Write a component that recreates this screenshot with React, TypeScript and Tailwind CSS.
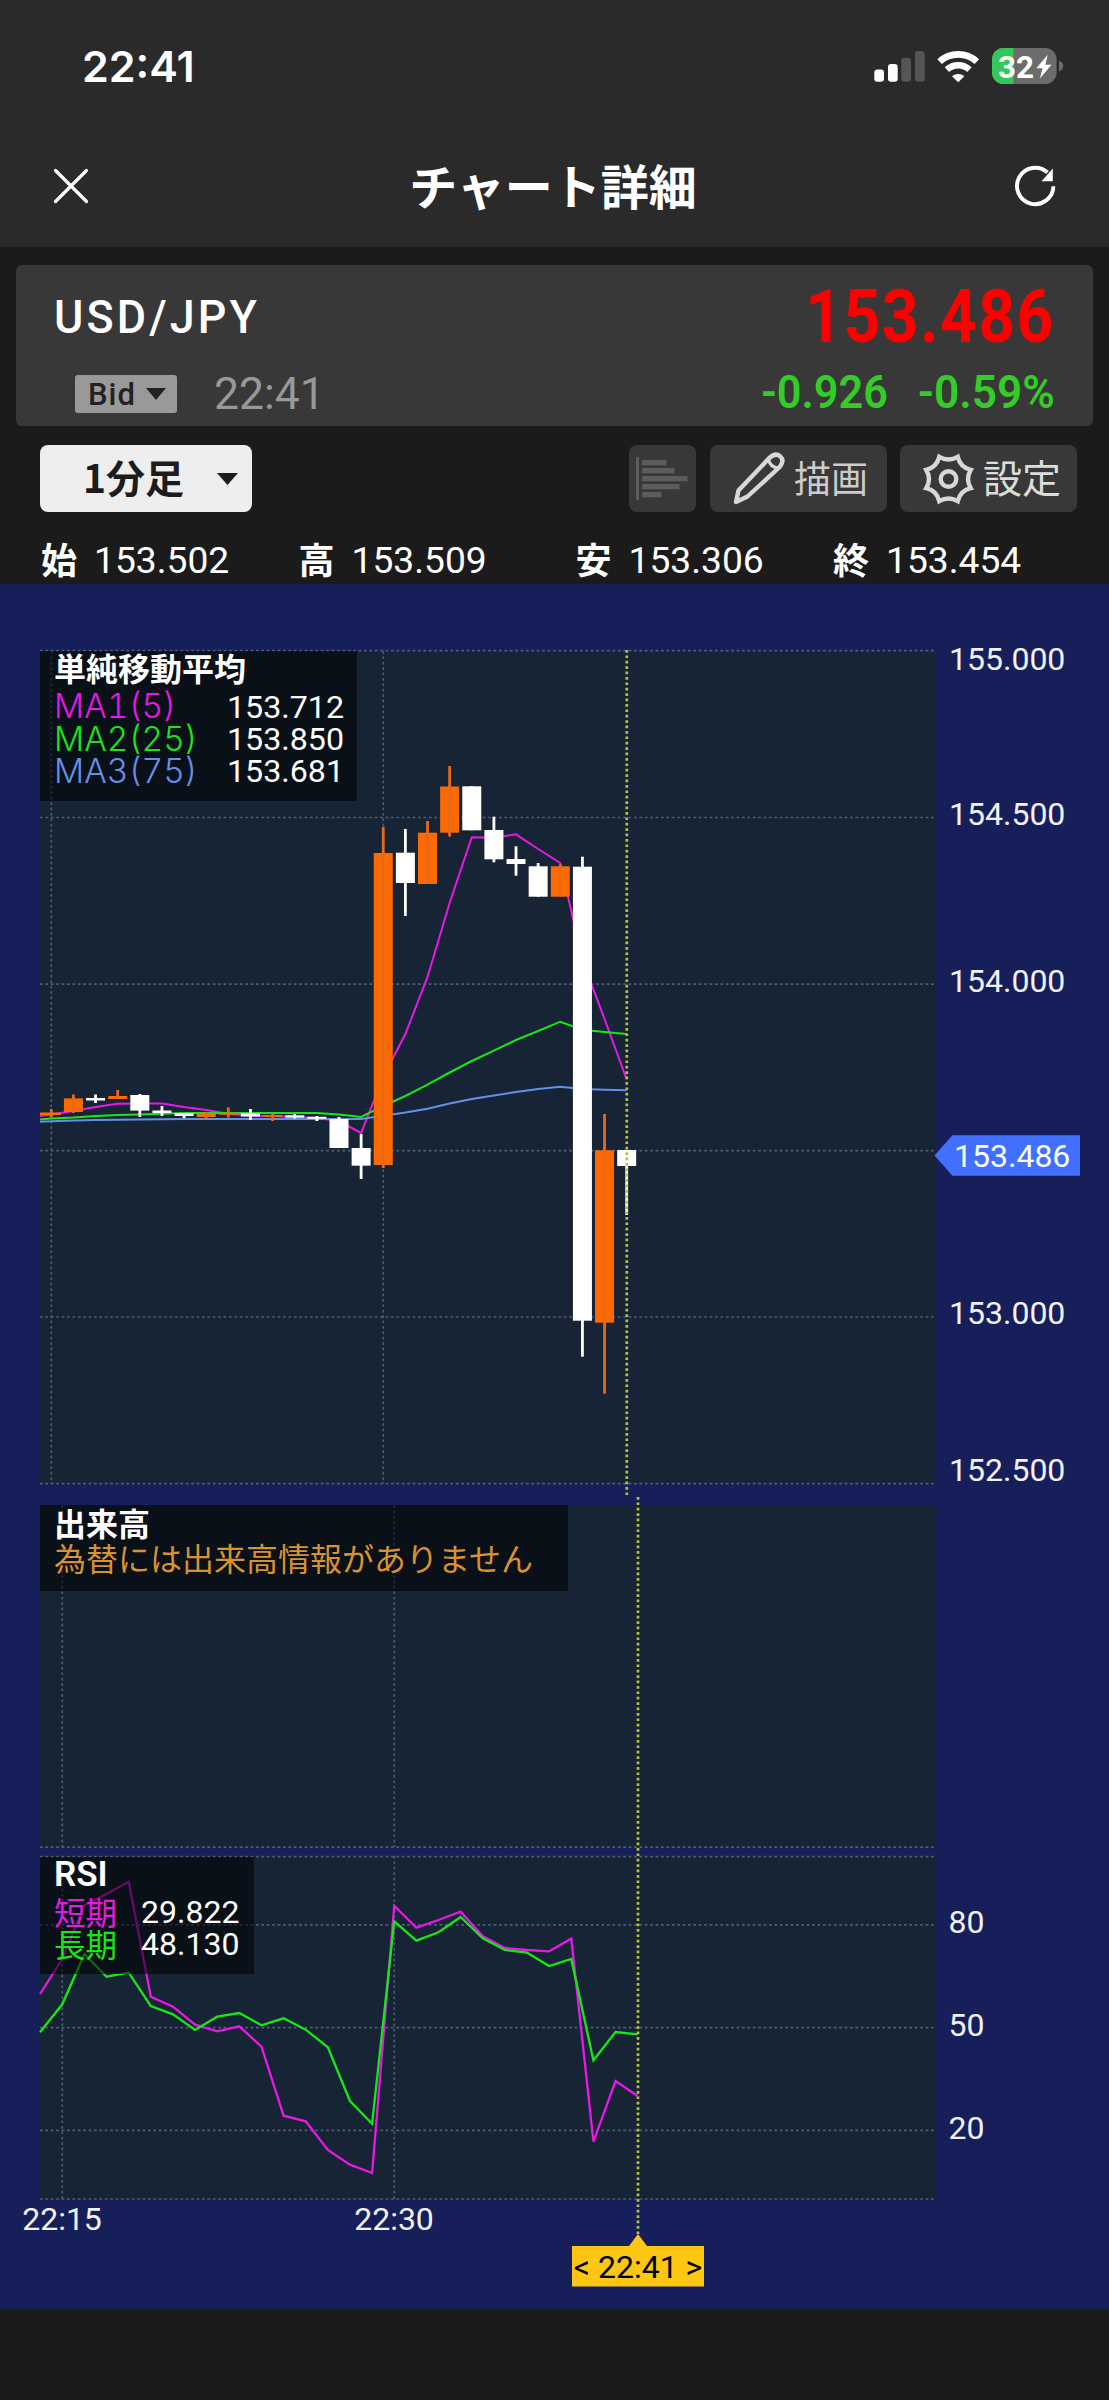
import React from 'react';

type Candle = [top: number, bottom: number, high: number, low: number, up: boolean];

// body top, body bottom, wick top, wick bottom, rising
const candles: Candle[] = [
  [1112.5, 1115, 1109, 1117.5, true],
  [1098.4, 1112, 1094.5, 1113, true],
  [1098, 1100.5, 1094.5, 1103, false],
  [1096, 1099, 1090, 1099, true],
  [1095, 1110.6, 1094, 1117, false],
  [1110.5, 1113, 1106, 1116, false],
  [1113, 1116, 1113, 1118, false],
  [1114, 1117, 1112, 1118.5, true],
  [1112.8, 1114.8, 1107.5, 1117.5, true],
  [1113.5, 1116.5, 1109, 1120, false],
  [1115, 1117, 1114, 1121, true],
  [1115.3, 1117.6, 1114, 1118.5, false],
  [1116.8, 1118.8, 1116, 1121, false],
  [1119, 1148, 1117, 1148, false],
  [1148, 1165.7, 1134, 1179, false],
  [853, 1165, 827, 1168, true],
  [852.7, 883, 829, 916, false],
  [832.7, 884, 821, 884, true],
  [786.5, 832.7, 766, 836.7, true],
  [786.3, 830.3, 786.3, 830.3, false],
  [830, 859.3, 816.7, 862.3, false],
  [859, 864, 846.3, 875.7, false],
  [866.3, 896.7, 863, 896.7, false],
  [866.3, 896.7, 864.3, 896.7, true],
  [866.7, 1320.7, 856.7, 1356.7, false],
  [1150.3, 1322.7, 1114, 1393.7, true],
  [1150, 1166, 1150, 1215, false],
];

const ma1 = [1116, 1114.5, 1111, 1107, 1103.7, 1103.4, 1103.4, 1107, 1110, 1113.7, 1116, 1116, 1117, 1118, 1121, 1133, 1077, 1034, 977, 903, 837.3, 837.7, 834.3, 849, 863, 960, 1019, 1079.5];
const ma2 = [1119.4, 1118.5, 1117.5, 1116, 1115, 1114.5, 1113.7, 1113, 1113, 1113, 1113, 1113, 1113, 1113, 1114.5, 1117, 1106, 1096, 1084.7, 1072.5, 1061, 1050.7, 1040, 1031, 1021.7, 1029.7, 1032, 1034];
const ma3 = [1121.7, 1121.3, 1120.5, 1120, 1119.8, 1119.6, 1119.3, 1119, 1119, 1119, 1119, 1119, 1119, 1119, 1119, 1119, 1115.7, 1112.5, 1108.7, 1103.5, 1099, 1095.5, 1092, 1089, 1086.7, 1089, 1089.7, 1090.3];

const rsiShort = [1994, 1959, 1905, 1894, 1881.7, 1996.7, 2006.7, 2024.7, 2031.3, 2026.3, 2046.7, 2115.7, 2121.3, 2150, 2164.7, 2173, 1905.7, 1927.7, 1920, 1911.7, 1936.3, 1948, 1950, 1951.3, 1938.7, 2141.7, 2081, 2096];
const rsiLong = [2032.3, 2004.3, 1954, 1976.7, 1972.7, 2006, 2014.3, 2030, 2016.7, 2013, 2025.3, 2018.3, 2029.7, 2047.3, 2101, 2123.7, 1921.3, 1940.7, 1932.3, 1917, 1938.3, 1950, 1952.7, 1966, 1959, 2060.3, 2032, 2034.3];

const STEP = 22.13;
const LEFT = 40;
const RIGHT = 934;
const PRICE_X = 51.3;
const RSI_X = 62.3;

// first value sits on the left edge of the plot, the rest on the minute steps
const toPoints = (values: number[], x0: number) =>
  values.map((y, i) => `${i === 0 ? LEFT : x0 + STEP * (i - 1)},${y}`).join(' ');

const HLine = ({ y }: { y: number }) => (
  <line x1={LEFT} x2={RIGHT} y1={y} y2={y} stroke="#56647c" strokeOpacity="0.9" strokeWidth="1.7" strokeDasharray="2.7 2.7" />
);

const VLine = ({ x, y1, y2 }: { x: number; y1: number; y2: number }) => (
  <line x1={x} x2={x} y1={y1} y2={y2} stroke="#56647c" strokeOpacity="0.9" strokeWidth="1.6" strokeDasharray="2.7 2.7" />
);

const Cursor = ({ x, y1, y2 }: { x: number; y1: number; y2: number }) => (
  <line x1={x} x2={x} y1={y1} y2={y2} stroke="#b4c43c" strokeWidth="2.7" strokeDasharray="2.7 2.7" />
);

const SignalIcons = () => (
  <svg width="192" height="40" viewBox="873 46 192 40">
    <rect x="874.3" y="69.5" width="9.7" height="12.3" rx="3" fill="#fff" />
    <rect x="888" y="64" width="9.7" height="17.8" rx="3" fill="#fff" />
    <rect x="901.3" y="57.8" width="9.7" height="24" rx="3" fill="#555" />
    <rect x="915" y="51" width="9.7" height="30.8" rx="3" fill="#555" />
    <g fill="none" stroke="#fff">
      <path d="M939.6 61.6a27.5 27.5 0 0 1 37.2 0" strokeWidth="6.6" />
      <path d="M946.9 69.6a16.8 16.8 0 0 1 22.6 0" strokeWidth="6.4" />
    </g>
    <path d="M952 76.3a9.4 9.4 0 0 1 12.4 0l-6.2 5.9z" fill="#fff" />
    <clipPath id="battery">
      <rect x="992" y="48" width="64.6" height="36" rx="11.5" />
    </clipPath>
    <g clipPath="url(#battery)">
      <rect x="992" y="48" width="65" height="36" fill="#6c6c6c" />
      <rect x="992" y="48" width="21.5" height="36" fill="#34c759" />
    </g>
    <path d="M1059 60.8c2.7.9 4.2 2.8 4.2 5.3s-1.5 4.5-4.2 5.4z" fill="#6c6c6c" />
    <text x="998" y="78" fill="#fff" fontFamily="Roboto" fontWeight="700" fontSize="32" textLength="36" lengthAdjust="spacingAndGlyphs">
      32
    </text>
    <path d="M1047.8 54.8 1036.3 68.2h6.3l-2.8 10.4 11.7-13.8h-6.2z" fill="#fff" />
  </svg>
);

const Header = () => (
  <header className="h-[246.5px] bg-[#2a2a2a]">
    <div className="flex h-[132px] items-center justify-between pl-[82px] pr-[44px]">
      <span className="font-['Inter'] text-[43px] font-semibold leading-none">22:41</span>
      <SignalIcons />
    </div>
    <div className="flex h-[108px] items-center justify-between pl-[52px] pr-[50px]">
      <svg width="38" height="38" viewBox="0 0 38 38">
        <path d="M3.5 3.5 34.5 34.5M34.5 3.5 3.5 34.5" stroke="#fff" strokeWidth="3.2" strokeLinecap="round" />
      </svg>
      <h1 className="-mt-[5px] pl-[3px] font-['Noto_Sans_CJK_JP',sans-serif] text-[48px] font-bold leading-none">チャート詳細</h1>
      <svg width="46" height="46" viewBox="0 0 46 46">
        <path d="M40.4 23.2A18.2 18.2 0 1 1 34.5 9.5" fill="none" stroke="#fff" strokeWidth="3.9" />
        <path d="M39.8 5.5V18.3H28.5z" fill="#fff" />
      </svg>
    </div>
  </header>
);

const Quote = () => (
  <section className="mx-4 mt-[18.5px] flex h-[161px] justify-between rounded-md bg-[#383838] px-[38px]">
    <div>
      <div className="mt-[29px] flex h-[46px] items-center">
        <span className="origin-left scale-x-[0.975] text-[46px] font-medium leading-none tracking-[3.2px]">USD/JPY</span>
      </div>
      <div className="mt-[31px] flex h-[46px] items-center pl-[21px]">
        <div className="flex h-[38px] w-[102px] items-center rounded-[3px] bg-[#999] pl-[13px] text-[#222]">
          <span className="w-[58px] text-[31px] font-medium leading-none tracking-[1px]">Bid</span>
          <svg width="20" height="12" viewBox="0 0 20 12">
            <path d="M0 0h20L10 12z" fill="#222" />
          </svg>
        </div>
        <span className="ml-[37px] text-[44.5px] leading-none text-[#999]">22:41</span>
      </div>
    </div>
    <div className="flex flex-col items-end">
      <div className="mt-[17px] flex h-[70px] items-center">
        <span className="origin-right scale-x-[0.87] text-[74px] font-bold leading-none tracking-[1.5px] text-[#ff0000]">153.486</span>
      </div>
      <div className="mt-[17px] flex h-[46px] w-[294px] items-center justify-between text-[46px] font-semibold leading-none text-[#33cc28]">
        <span className="origin-left scale-x-[0.94]">-0.926</span>
        <span className="origin-right scale-x-[0.96]">-0.59%</span>
      </div>
    </div>
  </section>
);

const Toolbar = () => (
  <div className="mt-[19px] flex h-[67px] pl-10 pr-8 font-['Noto_Sans_CJK_JP',sans-serif]">
    <button className="flex w-[212px] items-center rounded-lg bg-[#eee] pl-[43px] text-[#1c1c1c]">
      <span className="-mt-[5px] w-[134px] text-left text-[39px] font-bold leading-none">1分足</span>
      <svg width="21" height="12" viewBox="0 0 21 12">
        <path d="M0 0h21L10.5 12z" fill="#1c1c1c" />
      </svg>
    </button>
    <button className="ml-auto flex w-[67px] items-center rounded-lg bg-[#383838] pl-[7px]">
      <svg width="52" height="44" viewBox="0 0 52 44" fill="#5c5c5c">
        <path d="M0 0h3v43H0zM6 3h24.5v5.2H6zM6 11h32.5v5.2H6zM6 19h45.5v5.2H6zM6 27h37.5v5.2H6zM6 35h19.5v5.2H6z" />
      </svg>
    </button>
    <button className="ml-[14px] flex w-[177px] items-center rounded-lg bg-[#383838] pl-[23px] text-[#ccc]">
      <svg width="52" height="53" viewBox="0 0 52 53" fill="none" stroke="#d8d8d8" strokeWidth="4.4">
        <path d="M3 50 5.5 38.5 36.5 5.8Q42.5 .2 47.2 4.4T46.7 15L14.5 44.5Z" strokeLinejoin="round" />
        <path d="M35.5 6.8Q36.5 15.5 46 16" strokeWidth="3.2" />
      </svg>
      <span className="-mt-[3px] ml-[9px] text-[37px] leading-none">描画</span>
    </button>
    <button className="ml-[13px] flex w-[177px] items-center rounded-lg bg-[#383838] pl-[22px] text-[#ddd]">
      <svg width="53" height="52" viewBox="-26.5 -26 53 52" fill="none" stroke="#d8d8d8" strokeWidth="4.4">
        <path d="M-9.2-22.2Q0-16.8 9.2-22.2Q11.7-11.7 22.2-9.2Q16.8 0 22.2 9.2Q11.7 11.7 9.2 22.2Q0 16.8-9.2 22.2Q-11.7 11.7-22.2 9.2Q-16.8 0-22.2-9.2Q-11.7-11.7-9.2-22.2Z" />
        <circle r="7.8" />
      </svg>
      <span className="-mt-[5px] ml-[8px] text-[39px] leading-none">設定</span>
    </button>
  </div>
);

const ohlc = [
  { label: '始', value: '153.502', width: 'w-[257.5px]' },
  { label: '高', value: '153.509', width: 'w-[277px]' },
  { label: '安', value: '153.306', width: 'w-[257.5px]' },
  { label: '終', value: '153.454', width: 'w-[230px]' },
];

const Ohlc = () => (
  <div className="mt-[25px] flex h-[47px] items-center pl-[41px]">
    {ohlc.map((item) => (
      <div key={item.label} className={`flex items-center ${item.width}`}>
        <span className="-mt-[4px] w-[53px] font-['Noto_Sans_CJK_JP',sans-serif] text-[36px] font-bold leading-none">{item.label}</span>
        <span className="text-[37.2px] leading-none">{item.value}</span>
      </div>
    ))}
  </div>
);

const priceLabels = [
  { text: '155.000', y: 658 },
  { text: '154.500', y: 813.5 },
  { text: '154.000', y: 980.5 },
  { text: '153.000', y: 1312.5 },
  { text: '152.500', y: 1469 },
];

const movingAverages = [
  { name: 'MA1(5)', value: '153.712', color: 'text-[#e619e6]' },
  { name: 'MA2(25)', value: '153.850', color: 'text-[#19e619]' },
  { name: 'MA3(75)', value: '153.681', color: 'text-[#6490e8]' },
];

const PricePanel = () => (
  <div className="relative h-[912px]">
    <svg width="1109" height="912" viewBox="0 584 1109 912" className="block">
      <rect x={LEFT} y="651" width="895" height="833" fill="#172435" />
      {[650.7, 817.5, 984.2, 1150.6, 1317, 1483.7].map((y) => (
        <HLine key={y} y={y} />
      ))}
      <VLine x={51.3} y1={651} y2={1484} />
      <VLine x={383.3} y1={651} y2={1484} />
      <g fill="none" strokeWidth="2">
        <polyline points={toPoints(ma1, PRICE_X)} stroke="#e619e6" />
        <polyline points={toPoints(ma2, PRICE_X)} stroke="#19e619" />
        <polyline points={toPoints(ma3, PRICE_X)} stroke="#6490e8" />
      </g>
      {candles.map(([top, bottom, high, low, up], i) => {
        const x = PRICE_X + STEP * i;
        const left = i === 0 ? LEFT : x - 9.5;
        return (
          <g key={i} fill={up ? '#ff6a00' : '#fff'}>
            <rect x={left} y={top} width={x + 9.5 - left} height={bottom - top} />
            <rect x={x - 1.4} y={high} width="2.8" height={low - high} fill={up ? '#e8691a' : '#fff'} />
          </g>
        );
      })}
      <Cursor x={626.8} y1={650} y2={1495} />
      <g fill="#f2f3fa" fontFamily="Roboto" fontSize="32">
        {priceLabels.map((label) => (
          <text key={label.text} x="949" y={label.y + 11.5}>
            {label.text}
          </text>
        ))}
        <path d="M934.5 1155.500 952.500 1135.300H1080V1175.700H952.500z" fill="#4170ff" />
        <text x="954" y="1166.500" fill="#fff">153.486</text>
      </g>
    </svg>
    <div className="absolute left-10 top-[67px] h-[150px] w-[317px] bg-black/55 pl-[14px]">
      <div className="flex h-[32px] items-center font-['Noto_Sans_CJK_JP',sans-serif] text-[32px] font-bold leading-none">
        単純移動平均
      </div>
      {movingAverages.map((ma) => (
        <div key={ma.name} className="flex h-[32.2px] translate-y-[7.500px] items-center">
          <span className={`w-[173px] font-['Inter'] text-[33.500px] font-light leading-none tabular-nums ${ma.color}`}>{ma.name}</span>
          <span className="text-[32.200px] leading-none">{ma.value}</span>
        </div>
      ))}
    </div>
  </div>
);

const VolumePanel = () => (
  <div className="relative h-[352px]">
    <svg width="1109" height="352" viewBox="0 1496 1109 352" className="block">
      <rect x={LEFT} y="1505" width="895" height="342" fill="#172435" />
      <HLine y={1847.2} />
      <VLine x={62.3} y1={1505} y2={1847} />
      <VLine x={394.3} y1={1505} y2={1847} />
      <Cursor x={638} y1={1497} y2={1848} />
    </svg>
    <div className="absolute left-10 top-[9px] h-[86px] w-[528px] bg-black/55 pl-[14px] font-['Noto_Sans_CJK_JP',sans-serif] leading-none">
      <div className="flex h-[33px] items-center text-[32px] font-bold">出来高</div>
      <div className="flex h-[38px] items-center whitespace-nowrap text-[32px] text-[#d8922e]">為替には出来高情報がありません</div>
    </div>
  </div>
);

const RsiPanel = () => (
  <div className="relative h-[461px]">
    <svg width="1109" height="461" viewBox="0 1848 1109 461" className="block">
      <rect x={LEFT} y="1856" width="895" height="343" fill="#172435" />
      {[1856.7, 1924.8, 2027.6, 2130.4, 2199].map((y) => (
        <HLine key={y} y={y} />
      ))}
      <VLine x={62.3} y1={1856} y2={2199} />
      <VLine x={394.3} y1={1856} y2={2199} />
      <g fill="none" strokeWidth="2.3">
        <polyline points={toPoints(rsiShort, RSI_X)} stroke="#e619e6" />
        <polyline points={toPoints(rsiLong, RSI_X)} stroke="#19e619" />
      </g>
      <Cursor x={638} y1={1848} y2={2236} />
      <g fill="#f2f3fa" fontFamily="Roboto" fontSize="32">
        <text x="948.5" y="1932.5">80</text>
        <text x="948.5" y="2035.5">50</text>
        <text x="948.5" y="2138.5">20</text>
        <text x="62" y="2229.5" textAnchor="middle">22:15</text>
        <text x="394" y="2229.5" textAnchor="middle">22:30</text>
      </g>
      <path d="M572 2246h57l9-12 9 12h57v40.5H572z" fill="#fcc612" />
      <text x="638" y="2277.5" textAnchor="middle" fontFamily="Roboto" fontSize="32" fill="#000">
        &lt; 22:41 &gt;
      </text>
    </svg>
    <div className="absolute left-10 top-[9px] h-[117px] w-[214px] bg-black/55 pl-[14px]">
      <div className="flex h-[34px] items-center text-[35px] font-semibold leading-none">RSI</div>
      <div className="flex h-[32px] translate-y-[5px] items-center">
        <span className="w-[87px] font-['Noto_Sans_CJK_JP',sans-serif] text-[31.5px] leading-none text-[#e619e6]">短期</span>
        <span className="text-[32px] leading-none">29.822</span>
      </div>
      <div className="flex h-[32px] translate-y-[5px] items-center">
        <span className="w-[87px] font-['Noto_Sans_CJK_JP',sans-serif] text-[31.5px] leading-none text-[#19e619]">長期</span>
        <span className="text-[32px] leading-none">48.130</span>
      </div>
    </div>
  </div>
);

const App = () => {
  return (
    <div className="h-[2400px] w-[1109px] overflow-hidden bg-[#1b1b1b] font-['Roboto',sans-serif] text-white">
      <Header />
      <Quote />
      <Toolbar />
      <Ohlc />
      <main className="bg-[#171f5a]">
        <PricePanel />
        <VolumePanel />
        <RsiPanel />
      </main>
    </div>
  );
};

export default App;
